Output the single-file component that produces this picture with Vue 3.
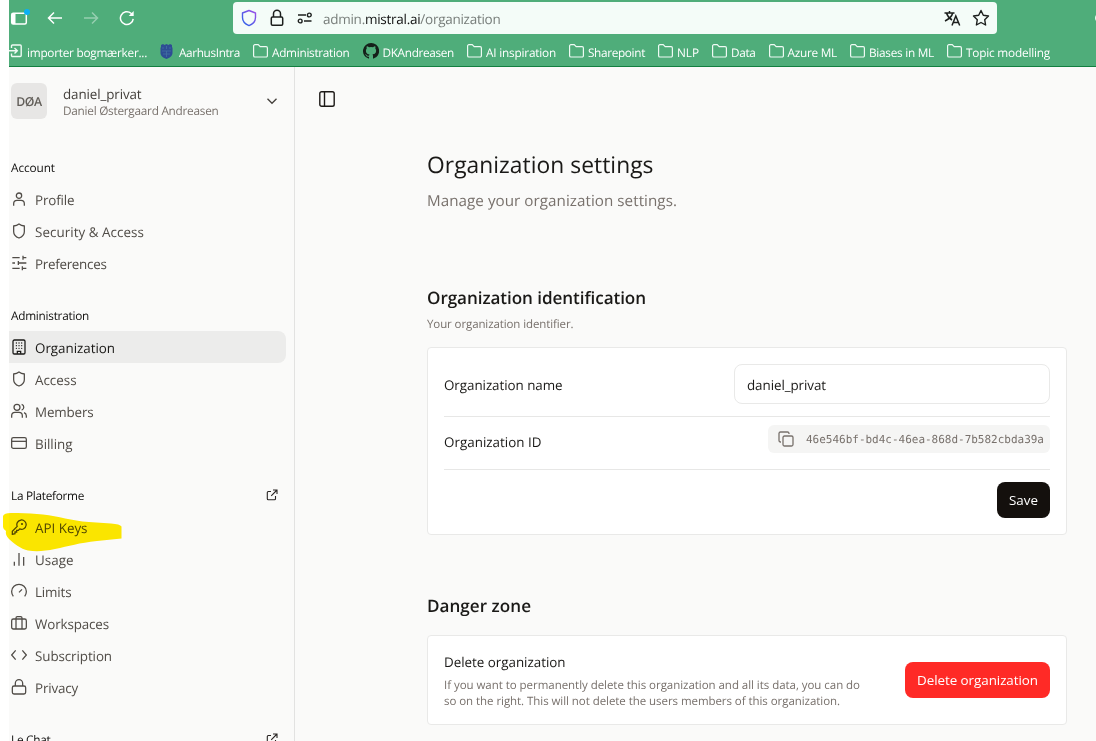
<script setup>
// Tightens or loosens tracking so a label spans the given width in pixels.
const vFit = {
  mounted(el, { value }) {
    const natural = el.getBoundingClientRect().width
    const spacing = (value - natural) / el.textContent.length
    el.style.letterSpacing = `${spacing.toFixed(3)}px`
  },
}

const icons = {
  user: '<circle cx="12" cy="7" r="4"/><path d="M4 22v-3a5 5 0 0 1 5-5h6a5 5 0 0 1 5 5v3"/>',
  shield: '<path d="M12 1.500c2.500 2 5 2.800 8 3v8.500c0 4.500-3 7.500-8 9.500-5-2-8-5-8-9.500V4.500c3-.2 5.500-1 8-3z"/>',
  sliders: '<path d="M2 4h11M18 4h5M18 1v6M2 12h4M11 12h12M11 9v6M2 20h11M18 20h5M17 17v6"/>',
  building: '<rect x="3" y="1.500" width="18" height="21" rx="2"/><path d="M9.500 22v-3.500h5V22"/><path stroke-linecap="round" d="M8 6h.1M12 6h.1M16 6h.1M8 10h.1M12 10h.1M16 10h.1M8 14h.1M12 14h.1M16 14h.1"/>',
  users: '<circle cx="9" cy="6.500" r="4.500"/><path d="M1 22v-3a5 5 0 0 1 5-5h6a5 5 0 0 1 5 5v3M23 22v-3a5 5 0 0 0-3.500-4.700M16 2.200a4.500 4.500 0 0 1 0 8.600"/>',
  card: '<rect x="1" y="4" width="22" height="16" rx="2.500"/><path d="M1 9.500h22"/>',
  key: '<path d="M2 23v-4.500L9.300 11.200A7 7 0 1 1 13 14.900L11 17H8.500v2.500H6V22z"/><circle cx="16.500" cy="7.500" r=".7"/>',
  bars: '<path d="M5 22v-6M12 22V3M19 22V9"/>',
  gauge: '<path d="M3.500 20a11 11 0 1 1 17 0M12 14l4.500-4.500"/>',
  briefcase: '<rect x="1" y="6" width="22" height="15" rx="2.500"/><path d="M7.500 21V4.500a2 2 0 0 1 2-2h5a2 2 0 0 1 2 2V21"/>',
  code: '<path d="m7 5-6 7 6 7M17 5l6 7-6 7"/>',
  lock: '<rect x="2" y="10.500" width="20" height="12" rx="2.500"/><path d="M6.500 10.500V6.500a5.500 5.500 0 0 1 11 0v4"/>',
}

const bookmarks = [
  { kind: 'import', label: 'importer bogmærker...', icon: 18, w: 120 },
  { kind: 'crest', label: 'AarhusIntra', icon: 19, w: 61 },
  { kind: 'folder', label: 'Administration', icon: 19, w: 77.500 },
  { kind: 'github', label: 'DKAndreasen', icon: 20, w: 71.500 },
  { kind: 'folder', label: 'AI inspiration', icon: 19, w: 70 },
  { kind: 'folder', label: 'Sharepoint', icon: 19, w: 57 },
  { kind: 'folder', label: 'NLP', icon: 19, w: 22 },
  { kind: 'folder', label: 'Data', icon: 19, w: 24.500 },
  { kind: 'folder', label: 'Azure ML', icon: 19, w: 49.500 },
  { kind: 'folder', label: 'Biases in ML', icon: 19, w: 65 },
  { kind: 'folder', label: 'Topic modelling', icon: 19, w: 84 },
]

const sections = [
  { title: 'Account', w: 44, items: [
    { label: 'Profile', icon: 'user', w: 39.500 },
    { label: 'Security & Access', icon: 'shield', w: 109 },
    { label: 'Preferences', icon: 'sliders', w: 71.500 },
  ] },
  { title: 'Administration', w: 78, items: [
    { label: 'Organization', icon: 'building', w: 80, active: true },
    { label: 'Access', icon: 'shield', w: 41.500 },
    { label: 'Members', icon: 'users', w: 58.500 },
    { label: 'Billing', icon: 'card', w: 37.500 },
  ] },
  { title: 'La Plateforme', w: 73, external: true, items: [
    { label: 'API Keys', icon: 'key', w: 52.500 },
    { label: 'Usage', icon: 'bars', w: 38.500 },
    { label: 'Limits', icon: 'gauge', w: 36.500 },
    { label: 'Workspaces', icon: 'briefcase', w: 74 },
    { label: 'Subscription', icon: 'code', w: 77 },
    { label: 'Privacy', icon: 'lock', w: 43 },
  ] },
  { title: 'Le Chat', w: 39.500, external: true, items: [] },
]
</script>

<template>
  <div class="window">
    <header class="chrome">
      <div class="toolbar">
        <div class="nav">
          <svg class="tabs" width="22" height="20" viewBox="0 0 22 20" fill="none">
            <rect x="2.700" y="5.200" width="14.600" height="10.800" rx="1.500" stroke="#fff" stroke-width="1.500" />
            <path d="M3 5.500h3.500v10.500H3z" fill="#fff" />
            <circle cx="18" cy="4" r="3" fill="#0ab0f5" />
          </svg>
          <svg class="back" width="16" height="16" viewBox="0 0 16 16"><path d="M15 8H1.500M7 2.500 1.500 8 7 13.500" /></svg>
          <svg class="forward" width="16" height="16" viewBox="0 0 16 16"><path d="M1 8h13.500M9 2.500 14.500 8 9 13.500" /></svg>
          <svg class="reload" width="16" height="16" viewBox="0 0 16 16"><path d="M14.200 8.800A6.400 6.400 0 1 1 12 3.300l1.500 1.400" /><path d="M14.700 1v5H9.700z" fill="#fff" stroke="none" /></svg>
        </div>
        <div class="address">
          <svg width="16" height="18" viewBox="0 0 16 18" fill="none">
            <defs>
              <linearGradient id="shieldTint" x1="0" y1="1" x2="1" y2="0">
                <stop offset="0" stop-color="#2563e8" />
                <stop offset="1" stop-color="#a04fe8" />
              </linearGradient>
            </defs>
            <path d="M8 1.500 1.500 4v4.500C1.500 12 4 15 8 16.600c4-1.600 6.500-4.600 6.500-8.100V4z" stroke="url(#shieldTint)" stroke-width="1.400" stroke-linejoin="round" />
          </svg>
          <svg class="padlock" width="14" height="18" viewBox="0 0 14 18" fill="none" stroke="#1c1f1d" stroke-width="1.500">
            <rect x="1.300" y="8" width="11.400" height="8.200" rx="1.200" />
            <path d="M3.500 8V4.800a3.500 3.500 0 0 1 7 0V8" />
          </svg>
          <svg class="permissions" width="16" height="12" viewBox="0 0 16 12" fill="none" stroke="#1c1f1d" stroke-width="1.400">
            <path d="M1 3h8M7 9h7.500" /><circle cx="12.300" cy="3" r="1.900" /><circle cx="3.200" cy="9" r="1.900" />
          </svg>
          <span class="url" v-fit="177.500">admin.<b>mistral.ai</b>/organization</span>
          <svg class="translate" width="17" height="17" viewBox="0 0 17 17" fill="none" stroke="#1c1f1d" stroke-width="1.500">
            <path d="M.5 3h10M5.500 1v2M2.500 3c1 3.500 3 5.500 5.500 7M8.700 3C8 6 5 9 1 11M8 15.500l3.800-9.500 3.900 9.500M9.300 12.600h5" />
          </svg>
          <svg class="star" width="18" height="18" viewBox="0 0 18 18" fill="none" stroke="#1c1f1d" stroke-width="1.400" stroke-linejoin="round">
            <path d="m9 1.500 2.300 4.800 5.200.7-3.800 3.700.9 5.300L9 13.500 4.400 16l.9-5.300L1.500 7l5.200-.7z" />
          </svg>
        </div>
        <i class="account-dot"></i>
      </div>
      <nav class="bookmarks">
        <a v-for="b in bookmarks" :key="b.label">
          <span class="bm-icon" :style="{ width: b.icon + 'px' }">
            <svg v-if="b.kind === 'folder'" width="15" height="14" viewBox="0 0 15 14" fill="none" stroke="#effaf4" stroke-width="1.200">
              <path d="M.6 2A1.300 1.300 0 0 1 1.900.7h3.300l2 2h5.900A1.300 1.300 0 0 1 14.400 4v7.700a1.300 1.300 0 0 1-1.300 1.300H1.900A1.300 1.300 0 0 1 .6 11.700z" />
            </svg>
            <svg v-else-if="b.kind === 'import'" width="13" height="14" viewBox="0 0 13 14" fill="none" stroke="#effaf4" stroke-width="1.400">
              <path d="M2.500 4V2a1 1 0 0 1 1-1h7.700a1 1 0 0 1 1 1v9.500a1 1 0 0 1-1 1H3.500a1 1 0 0 1-1-1V9.500M0 6.700h8M5.500 4 8.300 6.700 5.500 9.400" />
            </svg>
            <svg v-else-if="b.kind === 'crest'" class="crest" width="13" height="15" viewBox="0 0 13 15">
              <path d="M1 1 3 0l1.500 1 2-1 2 1L10 0l2 1v2l.5 1v5c0 3-3 5-6 6-3-1-6-3-6-6V4L1 3z" fill="#2e4d94" />
              <path d="M3 3v2m3.500-3v3M10 3v2M2 7h9M3 10h7M6.500 7v6" stroke="#4271a2" stroke-width=".8" fill="none" />
            </svg>
            <svg v-else width="16" height="16" viewBox="0 0 16 16">
              <path fill="#15201a" d="M8 0a8 8 0 0 0-2.530 15.590c.4.070.55-.17.55-.38v-1.490C3.800 14.200 3.330 12.800 3.330 12.800c-.36-.92-.89-1.170-.89-1.170-.73-.5.060-.49.060-.49.800.060 1.230.83 1.230.83.710 1.220 1.870.87 2.330.66.070-.52.280-.87.510-1.070-1.780-.2-3.650-.89-3.650-3.950 0-.87.310-1.590.82-2.150-.080-.2-.36-1.020.080-2.120 0 0 .67-.21 2.200.82a7.600 7.600 0 0 1 4 0c1.530-1.040 2.200-.82 2.200-.82.440 1.100.16 1.920.080 2.120.51.560.82 1.270.82 2.150 0 3.070-1.870 3.750-3.650 3.950.29.250.54.730.54 1.480v2.200c0 .21.150.46.550.38A8 8 0 0 0 8 0z" />
            </svg>
          </span>
          <span class="bm-slot" :style="{ width: b.w + 'px' }"><span class="bm-label" v-fit="b.w">{{ b.label }}</span></span>
        </a>
      </nav>
    </header>

    <div class="page">
      <aside class="sidebar">
        <div class="org">
          <span class="avatar"><span v-fit="25.500">DØA</span></span>
          <span class="org-text">
            <span class="org-name" v-fit="78.500">daniel_privat</span>
            <span class="org-owner" v-fit="155.500">Daniel Østergaard Andreasen</span>
          </span>
          <svg class="chevron" width="12" height="12" viewBox="0 0 12 12"><path d="m1.500 3.700 4.500 4.600 4.500-4.600" /></svg>
        </div>
        <section v-for="s in sections" :key="s.title" class="group">
          <h3>
            <span v-fit="s.w">{{ s.title }}</span>
            <svg v-if="s.external" width="12" height="12" viewBox="0 0 12 12">
              <path d="M5 2.500H2.300a1 1 0 0 0-1 1v6.200a1 1 0 0 0 1 1h6.200a1 1 0 0 0 1-1V7M7 1h4v4M11 1 5.200 6.800" />
            </svg>
          </h3>
          <a v-for="item in s.items" :key="item.label" :class="{ active: item.active }">
            <svg width="16" height="16" viewBox="0 0 24 24" v-html="icons[item.icon]"></svg>
            <span v-fit="item.w">{{ item.label }}</span>
          </a>
        </section>
      </aside>

      <main class="main">
        <svg class="panel" width="16" height="16" viewBox="0 0 16 16"><rect x=".8" y=".8" width="14.400" height="14.400" rx="1.800" /><path d="M5.500 1v14" /></svg>
        <div class="content">
          <h1><span v-fit="226.500">Organization settings</span></h1>
          <p class="lead"><span v-fit="250">Manage your organization settings.</span></p>

          <h2 class="ident"><span v-fit="219">Organization identification</span></h2>
          <p class="hint"><span v-fit="146.500">Your organization identifier.</span></p>
          <div class="card">
            <div class="row name-row">
              <span class="label" v-fit="118.500">Organization name</span>
              <div class="field"><span v-fit="79">daniel_privat</span></div>
            </div>
            <div class="row id-row">
              <span class="label" v-fit="97.500">Organization ID</span>
              <div class="chip">
                <svg width="16" height="16" viewBox="0 0 16 16"><rect x="5" y="5" width="10" height="10" rx="1.500" /><path d="M3 11h-.7A1.500 1.500 0 0 1 1 9.500V2.300A1.500 1.500 0 0 1 2.500 1h7A1.500 1.500 0 0 1 11 2.300V3" /></svg>
                <code v-fit="238">46e546bf-bd4c-46ea-868d-7b582cbda39a</code>
              </div>
            </div>
            <div class="actions"><button class="save"><span v-fit="29">Save</span></button></div>
          </div>

          <h2 class="danger"><span v-fit="104">Danger zone</span></h2>
          <div class="card danger-card">
            <div class="danger-text">
              <strong><span v-fit="121.500">Delete organization</span></strong>
              <p><span v-fit="416">If you want to permanently delete this organization and all its data, you can do</span></p>
              <p><span v-fit="396">so on the right. This will not delete the users members of this organization.</span></p>
            </div>
            <button class="delete"><span v-fit="121">Delete organization</span></button>
          </div>
        </div>
      </main>
    </div>

    <svg class="marker" width="120" height="42" viewBox="0 0 120 42">
      <path d="M0 4Q1 1 8 1Q25 .5 40 2.500C56 4 68 9 86 10L108 11.500Q117 12 118.500 14.500V26.500L94 29C76 31 66 34 52 37C42 39 34 40 25 38.500C18 37 10 31 6 27Q2 23 3 19Q0 17 0 15z" fill="#ffea00" />
    </svg>
  </div>
</template>

<style>
body {
  margin: 0;
  background: #fff;
  overflow: hidden;
}
</style>

<style scoped>
* {
  box-sizing: border-box;
}
.window {
  position: relative;
  width: 1096px;
  height: 741px;
  padding-left: 9px;
  overflow: hidden;
  display: flex;
  flex-direction: column;
  font-family: "Open Sans", "Noto Sans", sans-serif;
  font-size: 13.400px;
  color: #1a1917;
  text-rendering: geometricPrecision;
  white-space: nowrap;
}
span {
  display: inline-block;
}
svg {
  flex: none;
  display: block;
}
h1, h2, h3, p {
  margin: 0;
  font-weight: 400;
}
.chrome {
  flex: none;
  height: 67px;
  background: #4fad7a;
  border-bottom: 1px solid #127f40;
}
.toolbar {
  display: flex;
  height: 36px;
  padding-top: 2px;
}
.nav {
  display: flex;
  flex: none;
  align-items: center;
  width: 224px;
  height: 32px;
  fill: none;
  stroke: #fff;
  stroke-width: 1.500;
}
.tabs {
  stroke: none;
  margin-top: -1px;
}
.back {
  margin-left: 16px;
}
.forward {
  margin-left: 20px;
  opacity: 0.4;
}
.reload {
  margin-left: 20px;
}
.address {
  display: flex;
  flex: none;
  align-items: center;
  width: 764px;
  height: 32px;
  padding: 0 7px 0 8px;
  background: #f4fcf8;
  border-radius: 4px;
}
.padlock {
  margin-left: 13px;
}
.permissions {
  margin: 0 10px 0 13px;
}
.url {
  font-size: 13.500px;
  line-height: 20px;
  margin-top: 2px;
  color: #777d7a;
}
.url b {
  font-weight: 400;
  color: #111;
}
.translate {
  margin-left: auto;
}
.star {
  margin-left: 11px;
}
.account-dot {
  flex: none;
  width: 10px;
  height: 10px;
  margin: 11px 0 0 98px;
  border-radius: 50%;
  background: #effaf4;
}
.bookmarks {
  display: flex;
  gap: 13px;
  height: 30px;
  padding-top: 1px;
  color: #fff;
  font-size: 11.800px;
}
.bookmarks a {
  display: flex;
  flex: none;
  align-items: center;
}
.bm-icon {
  flex: none;
  padding-bottom: 1px;
}
.crest {
  margin-top: 1px;
}
.bm-slot {
  flex: none;
  line-height: 18px;
  padding-top: 2px;
}
.page {
  flex: 1;
  min-height: 0;
  display: flex;
  background: #fafaf9;
}
.sidebar {
  width: 286px;
  flex: none;
  border-right: 1px solid #e2e2e1;
  overflow: hidden;
}
.org {
  display: flex;
  height: 85px;
  padding: 16px 16px 0 2px;
}
.avatar {
  width: 36px;
  height: 36px;
  border-radius: 6px;
  background: #e7e6e5;
  color: #625e59;
  font-size: 12.300px;
  font-weight: 600;
  line-height: 37px;
  text-align: center;
}
.org-text {
  display: flex;
  flex-direction: column;
  align-items: flex-start;
  margin-left: 16px;
}
.org-name {
  line-height: 18px;
  margin-top: 2px;
  color: #44403c;
}
.org-owner {
  line-height: 16px;
  font-size: 11.800px;
  color: #78716c;
}
.chevron {
  margin: 12px 0 0 auto;
  fill: none;
  stroke: #44403c;
  stroke-width: 1.300;
}
.group {
  margin-bottom: 20px;
}
.group h3 {
  display: flex;
  align-items: center;
  justify-content: space-between;
  height: 32px;
  padding: 0 16px 0 2px;
  font-size: 11.800px;
  color: #0f0e0d;
}
.group h3 svg {
  fill: none;
  stroke: #292524;
  stroke-width: 1.100;
  margin-top: -2px;
}
.group a {
  display: flex;
  align-items: center;
  gap: 8px;
  width: 277px;
  height: 32px;
  padding-left: 2px;
  border-radius: 0 8px 8px 0;
  color: #504c47;
}
.group a svg {
  fill: none;
  stroke: currentColor;
  stroke-width: 1.900;
  margin-top: -2px;
}
.group a.active {
  margin: -1px 0 1px;
  padding-top: 2px;
  background: #ececeb;
  color: #1a1917;
}
.main {
  flex: 1;
  padding-top: 24px;
}
.panel {
  margin-left: 24px;
  fill: none;
  stroke: #1c1917;
  stroke-width: 1.400;
}
.content {
  width: 640px;
  margin: 42px 0 0 132px;
}
h1 {
  font-size: 22.800px;
  line-height: 32px;
}
.lead {
  margin-top: 8px;
  font-size: 15.200px;
  line-height: 24px;
  color: #78716c;
}
h2 {
  font-size: 17.100px;
  font-weight: 600;
  line-height: 28px;
}
.ident {
  margin-top: 72px;
}
.hint {
  margin-top: 4px;
  font-size: 11.500px;
  line-height: 16px;
  color: #78716c;
}
.card {
  margin-top: 14px;
  padding: 16px;
  background: #fff;
  border: 1px solid #e9e9e8;
  border-radius: 4px;
}
.row {
  display: flex;
  justify-content: space-between;
  border-bottom: 1px solid #e7e7e6;
}
.name-row {
  height: 53px;
}
.name-row .label {
  line-height: 42px;
}
.field {
  width: 316px;
  height: 40px;
  padding-left: 12px;
  border: 1px solid #e9e9e8;
  border-radius: 8px;
  line-height: 40px;
}
.id-row {
  height: 53px;
}
.id-row .label {
  line-height: 50px;
}
.chip {
  display: flex;
  align-items: center;
  width: 282px;
  height: 28px;
  margin-top: 8px;
  padding-left: 10px;
  gap: 12px;
  border-radius: 6px;
  background: #f5f5f4;
  color: #78716c;
}
.chip svg {
  fill: none;
  stroke: #78716c;
  stroke-width: 1.300;
}
.chip code {
  display: inline-block;
  font-family: "DejaVu Sans Mono", monospace;
  font-size: 11px;
}
.actions {
  display: flex;
  justify-content: flex-end;
  padding-top: 12px;
}
button {
  height: 36px;
  padding: 0;
  border: 0;
  border-radius: 8px;
  font: inherit;
  line-height: 37px;
  color: #fff;
}
.save {
  width: 53px;
  background: #14100d;
}
.danger {
  margin-top: 58px;
}
.danger-card {
  display: flex;
  justify-content: space-between;
  height: 90px;
}
.danger-text strong {
  display: block;
  font-weight: 400;
  line-height: 20px;
  margin-bottom: 6px;
}
.danger-text p {
  font-size: 11.500px;
  line-height: 16px;
  color: #78716c;
}
.delete {
  width: 145px;
  margin-top: 10px;
  background: #ff2a26;
}
.marker {
  position: absolute;
  left: 3px;
  top: 512px;
  mix-blend-mode: multiply;
}
</style>
